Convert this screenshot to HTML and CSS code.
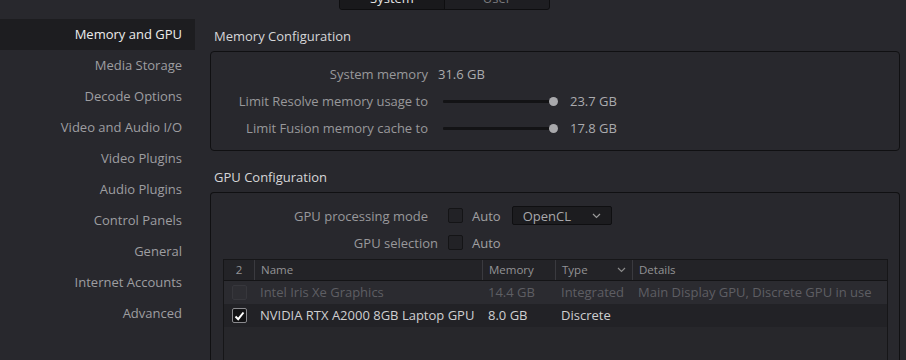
FILE: index.html
```html
<!DOCTYPE html>
<html>
<head>
<meta charset="utf-8">
<link rel="stylesheet" href="styles.css">
</head>
<body>
<div class="topbar">
  <div class="seg">
    <div class="seg-item active">System</div>
    <div class="seg-item">User</div>
  </div>
</div>
<div class="layout">
  <nav class="sidebar">
    <div class="nav-item selected">Memory and GPU</div>
    <div class="nav-item">Media Storage</div>
    <div class="nav-item">Decode Options</div>
    <div class="nav-item">Video and Audio I/O</div>
    <div class="nav-item">Video Plugins</div>
    <div class="nav-item">Audio Plugins</div>
    <div class="nav-item">Control Panels</div>
    <div class="nav-item">General</div>
    <div class="nav-item">Internet Accounts</div>
    <div class="nav-item">Advanced</div>
  </nav>
  <main class="main">
    <div class="section-title">Memory Configuration</div>
    <div class="panel mem-panel">
      <div class="row">
        <div class="label">System memory</div>
        <div class="value">31.6 GB</div>
      </div>
      <div class="row">
        <div class="label">Limit Resolve memory usage to</div>
        <div class="slider"><div class="track"></div><div class="knob"></div></div>
        <div class="value">23.7 GB</div>
      </div>
      <div class="row">
        <div class="label">Limit Fusion memory cache to</div>
        <div class="slider"><div class="track"></div><div class="knob"></div></div>
        <div class="value">17.8 GB</div>
      </div>
    </div>
    <div class="section-title gpu-title">GPU Configuration</div>
    <div class="panel gpu-panel">
      <div class="row">
        <div class="label">GPU processing mode</div>
        <div class="check"></div>
        <div class="auto">Auto</div>
        <div class="select">
          <span>OpenCL</span>
          <svg class="chev" width="9" height="6" viewBox="0 0 9 6"><path d="M1 1 L4.5 4.5 L8 1" fill="none" stroke="#9a9a9a" stroke-width="1.2"/></svg>
        </div>
      </div>
      <div class="row">
        <div class="label wide">GPU selection</div>
        <div class="check near"></div>
        <div class="auto">Auto</div>
      </div>
      <div class="table">
        <div class="thead">
          <div class="c c1 center">2</div>
          <div class="c c2">Name</div>
          <div class="c c3">Memory</div>
          <div class="c c4">Type<svg class="chev" width="9" height="6" viewBox="0 0 9 6"><path d="M1 1 L4.5 4.5 L8 1" fill="none" stroke="#8a8a8a" stroke-width="1.2"/></svg></div>
          <div class="c c5">Details</div>
        </div>
        <div class="trow odd dim">
          <div class="c c1 center"><div class="tcheck disabled"></div></div>
          <div class="c c2">Intel Iris Xe Graphics</div>
          <div class="c c3">14.4 GB</div>
          <div class="c c4">Integrated</div>
          <div class="c c5">Main Display GPU, Discrete GPU in use</div>
        </div>
        <div class="trow even">
          <div class="c c1 center"><div class="tcheck checked"><svg width="11" height="10" viewBox="0 0 11 10"><path d="M1.5 5.5 L4.2 8.2 L9.5 1.5" fill="none" stroke="#ffffff" stroke-width="2"/></svg></div></div>
          <div class="c c2">NVIDIA RTX A2000 8GB Laptop GPU</div>
          <div class="c c3">8.0 GB</div>
          <div class="c c4">Discrete</div>
          <div class="c c5"></div>
        </div>
      </div>
    </div>
  </main>
</div>
</body>
</html>
```

FILE: styles.css
```css
* { box-sizing: border-box; }
html, body {
  margin: 0;
  padding: 0;
  background: #28282d;
  height: 360px;
  overflow: hidden;
}
body {
  font-family: "Open Sans", "Noto Sans", sans-serif;
  font-size: 13px;
  color: #9c9c9f;
}
.topbar {
  height: 10px;
  display: flex;
  align-items: flex-end;
  padding-left: 339px;
}
.seg {
  display: flex;
  flex-shrink: 0;
  width: 211px;
  height: 23px;
  border: 1px solid #0e0e10;
  border-radius: 3px;
  background: #1e1e22;
  overflow: hidden;
}
.seg-item {
  flex: 1;
  text-align: center;
  line-height: 21px;
  color: #7a7a7e;
}
.seg-item.active {
  background: #19191c;
  color: #e6e6e6;
  border-right: 1px solid #0e0e10;
}
.layout {
  display: flex;
}
.sidebar {
  width: 196px;
  padding-top: 9px;
  flex-shrink: 0;
}
.nav-item {
  height: 31px;
  line-height: 31px;
  text-align: right;
  padding-right: 13px;
  width: 195px;
  color: #9e9ea1;
}
.nav-item.selected {
  background: #1d1d20;
  color: #ececec;
}
.main {
  flex: 1;
  padding-left: 14px;
  padding-right: 6px;
}
.section-title {
  height: 32px;
  line-height: 32px;
  padding-top: 1px;
  padding-left: 4px;
  color: #d6d6d8;
  margin-top: 9px;
}
.gpu-title { margin-top: 9px; }
.panel {
  border: 1px solid #101012;
  border-radius: 4px;
  background: #28282d;
}
.mem-panel {
  padding: 8px 0 9px 0;
}
.gpu-panel {
  padding: 9px 11px 0 12px;
  height: 168px;
  border-bottom: none;
  border-bottom-left-radius: 0;
  border-bottom-right-radius: 0;
}
.row {
  display: flex;
  align-items: center;
  height: 27px;
}
.label {
  width: 217px;
  text-align: right;
  color: #98989b;
  flex-shrink: 0;
}
.gpu-panel .label { width: 205px; }
.gpu-panel .label.wide { width: 215px; }
.value {
  margin-left: 10px;
  color: #ababae;
}
.slider {
  position: relative;
  margin-left: 15px;
  width: 115px;
  height: 10px;
}
.track {
  position: absolute;
  left: 0;
  right: 4px;
  top: 4px;
  height: 3px;
  background: #131315;
  border-radius: 1px;
}
.knob {
  position: absolute;
  right: 0;
  top: 1px;
  width: 9px;
  height: 9px;
  border-radius: 50%;
  background: #a9a9ac;
}
.slider + .value { margin-left: 12px; }
.check {
  width: 15px;
  height: 15px;
  margin-left: 20px;
  background: #222226;
  border: 1px solid #141416;
  border-radius: 2px;
}
.check.near { margin-left: 10px; }
.auto {
  margin-left: 9px;
  color: #a0a0a3;
}
.select {
  margin-left: 11px;
  width: 100px;
  height: 19px;
  background: #1c1c1f;
  border: 1px solid #0f0f11;
  border-radius: 2px;
  display: flex;
  align-items: center;
  justify-content: space-between;
  padding: 0 10px 0 10px;
  color: #a8a8ab;
}
.table {
  margin-top: 3px;
  border: 1px solid #161618;
  border-bottom: none;
  background: #27272b;
  height: 101px;
}
.thead, .trow {
  display: flex;
}
.thead {
  height: 21px;
  background: #232327;
  border-bottom: 1px solid #141416;
  font-size: 11.5px;
  color: #939396;
}
.thead .c {
  line-height: 20px;
  border-left: 1px solid #3a3a3f;
  height: 20px;
}
.thead .c1 { border-left: none; }
.c {
  padding-left: 6px;
  white-space: nowrap;
  overflow: hidden;
}
.c1 { width: 30px; padding-left: 0; }
.c2 { width: 228px; }
.c3 { width: 73px; }
.c4 { width: 77px; display: flex; align-items: center; justify-content: space-between; padding-right: 6px; }
.c5 { flex: 1; }
.center { text-align: center; display: flex; justify-content: center; align-items: center; }
.trow {
  height: 23px;
  line-height: 23px;
  align-items: center;
}
.trow.odd { background: #2b2b30; }
.trow.even { background: #222226; color: #cfcfd1; }
.trow.dim { color: #5e5e63; }
.tcheck {
  width: 15px;
  height: 15px;
  border-radius: 2px;
  display: flex;
  align-items: center;
  justify-content: center;
}
.tcheck.disabled {
  background: #2e2e33;
  border: 1px solid #37373c;
}
.tcheck.checked {
  background: #121214;
  border: 1px solid #8a8a8e;
}
```
